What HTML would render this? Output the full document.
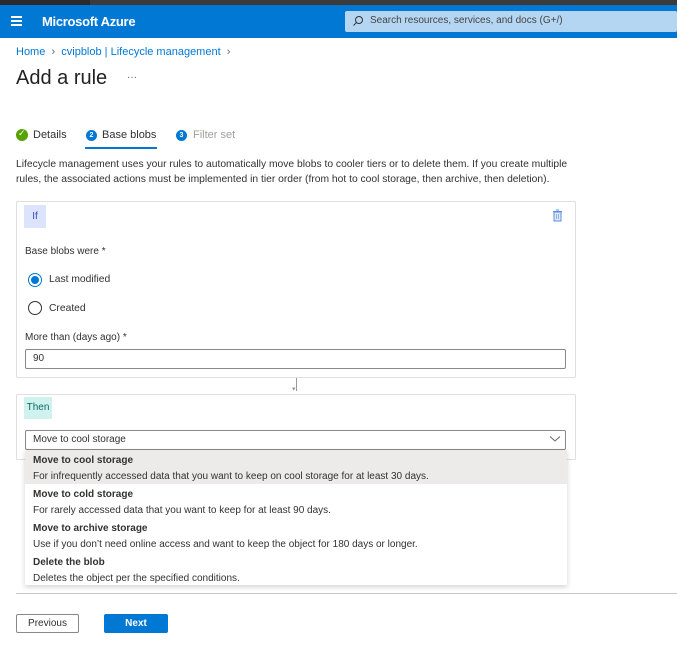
<!DOCTYPE html>
<html><head><meta charset="utf-8"><style>
*{margin:0;padding:0;box-sizing:border-box}
body{width:677px;height:647px;background:#fff;font-family:"Liberation Sans",sans-serif;color:#323130;position:relative;overflow:hidden;font-size:10px}
.a{position:absolute;white-space:nowrap}
</style></head><body>
<div class="a" style="left:0;top:0;width:677px;height:5px;background:#2b2b2b"></div>
<div class="a" style="left:90px;top:0;width:587px;height:5px;background:#3b3b3b"></div>
<div class="a" style="left:0;top:5px;width:677px;height:33px;background:#0078d4"></div>
<div class="a" style="left:11px;top:16px;width:11px;height:2px;background:#fff;box-shadow:0 4px 0 #fff,0 8px 0 #fff"></div>
<div class="a" style="left:42px;top:14px;color:#fff;font-weight:bold;font-size:13px;letter-spacing:-0.3px">Microsoft Azure</div>
<div class="a" style="left:345px;top:11px;width:332px;height:21px;background:#b4d6f3;border-radius:2px"></div>
<svg class="a" style="left:352px;top:15px" width="12" height="12" viewBox="0 0 12 12"><circle cx="7" cy="5" r="3.5" fill="none" stroke="#333" stroke-width="1"/><path d="M4.5 7.5L1.5 10.5" stroke="#333" stroke-width="1"/></svg>
<div class="a" style="left:370px;top:15px;color:#444;font-size:10px">Search resources, services, and docs (G+/)</div>
<div class="a" style="left:16px;top:46px;color:#0078d4;font-size:11px">Home &nbsp;<span style="color:#666">›</span>&nbsp; cvipblob | Lifecycle management &nbsp;<span style="color:#666">›</span></div>
<div class="a" style="left:16px;top:67px;color:#222;font-size:20px">Add a rule</div>
<div class="a" style="left:127px;top:72px;color:#555;font-size:10px">···</div>
<div class="a" style="left:16px;top:129px;width:12px;height:12px;border-radius:50%;background:#57a300"></div>
<div class="a" style="left:18px;top:128px;color:#fff;font-size:9px">✓</div>
<div class="a" style="left:33px;top:129px;font-size:11px">Details</div>
<div class="a" style="left:86px;top:130px;width:11px;height:11px;border-radius:50%;background:#0078d4;color:#fff;font-size:7px;text-align:center;line-height:11px;font-weight:bold">2</div>
<div class="a" style="left:102px;top:129px;font-size:11px">Base blobs</div>
<div class="a" style="left:85px;top:147px;width:72px;height:2px;background:#0078d4"></div>
<div class="a" style="left:176px;top:130px;width:11px;height:11px;border-radius:50%;background:#0078d4;color:#fff;font-size:7px;text-align:center;line-height:11px;font-weight:bold">3</div>
<div class="a" style="left:193px;top:129px;font-size:11px;color:#a19f9d">Filter set</div>
<div class="a" style="left:16px;top:157px;font-size:10.3px;line-height:15px">Lifecycle management uses your rules to automatically move blobs to cooler tiers or to delete them. If you create multiple<br>rules, the associated actions must be implemented in tier order (from hot to cool storage, then archive, then deletion).</div>
<div class="a" style="left:16px;top:201px;width:560px;height:177px;border:1px solid #e1dfdd;border-radius:2px"></div>
<div class="a" style="left:24px;top:205px;width:22px;height:23px;background:#dbe4fc;color:#3b4bbf;font-size:10px;line-height:23px;text-align:center">If</div>
<svg class="a" style="left:552px;top:209px" width="11" height="13" viewBox="0 0 11 13"><rect x="2" y="3" width="7" height="9" fill="#dce8fb" stroke="#5b8fd8"/><path d="M1 2.5H10M4 1H7" stroke="#5b8fd8"/><path d="M4.5 5V10M6.5 5V10" stroke="#8fb2e6"/></svg>
<div class="a" style="left:25px;top:246px;font-size:10px">Base blobs were *</div>
<div class="a" style="left:28px;top:273px;width:14px;height:14px;border-radius:50%;border:1px solid #0078d4"></div>
<div class="a" style="left:31px;top:276px;width:8px;height:8px;border-radius:50%;background:#0078d4"></div>
<div class="a" style="left:49px;top:274px;font-size:10.3px">Last modified</div>
<div class="a" style="left:28px;top:301px;width:14px;height:14px;border-radius:50%;border:1px solid #323130"></div>
<div class="a" style="left:49px;top:303px;font-size:10.3px">Created</div>
<div class="a" style="left:25px;top:332px;font-size:10px">More than (days ago) *</div>
<div class="a" style="left:25px;top:349px;width:541px;height:20px;border:1px solid #8a8886;border-radius:2px;padding-left:7px;line-height:18px;font-size:10px">90</div>
<div class="a" style="left:296px;top:378px;width:1px;height:13px;background:#999"></div>
<div class="a" style="left:292px;top:385px;color:#999;font-size:7px">▾</div>
<div class="a" style="left:16px;top:394px;width:560px;height:66px;border:1px solid #e1dfdd;border-radius:2px"></div>
<div class="a" style="left:24px;top:397px;width:28px;height:22px;background:#d0f2ee;color:#0b6a61;font-size:10px;line-height:22px;text-align:center">Then</div>
<div class="a" style="left:25px;top:430px;width:541px;height:20px;border:1px solid #8a8886;border-radius:2px;background:#fff;padding-left:7px;line-height:18px;font-size:10px">Move to cool storage</div>
<svg class="a" style="left:549px;top:435px" width="12" height="8" viewBox="0 0 12 8"><path d="M1 1.5L6 6L11 1.5" fill="none" stroke="#666"/></svg>
<div class="a" style="left:25px;top:450px;width:542px;height:135px;background:#fff;box-shadow:0 2px 5px rgba(0,0,0,.18)"></div>
<div class="a" style="left:25px;top:450px;width:542px;height:34px;background:#edebe9"></div>
<div class="a" style="left:33px;top:453px;font-size:10px;line-height:16px"><b>Move to cool storage</b><br>For infrequently accessed data that you want to keep on cool storage for at least 30 days.</div>
<div class="a" style="left:33px;top:487px;font-size:10px;line-height:16px"><b>Move to cold storage</b><br>For rarely accessed data that you want to keep for at least 90 days.</div>
<div class="a" style="left:33px;top:521px;font-size:10px;line-height:16px"><b>Move to archive storage</b><br>Use if you don’t need online access and want to keep the object for 180 days or longer.</div>
<div class="a" style="left:33px;top:555px;font-size:10px;line-height:16px"><b>Delete the blob</b><br>Deletes the object per the specified conditions.</div>
<div class="a" style="left:16px;top:593px;width:661px;height:1px;background:#c8c6c4"></div>
<div class="a" style="left:16px;top:614px;width:63px;height:19px;border:1px solid #8a8886;border-radius:2px;text-align:center;line-height:18px;font-size:10px">Previous</div>
<div class="a" style="left:104px;top:614px;width:64px;height:19px;background:#0078d4;border-radius:2px;text-align:center;line-height:20px;font-size:10px;color:#fff;font-weight:bold">Next</div>
</body></html>
